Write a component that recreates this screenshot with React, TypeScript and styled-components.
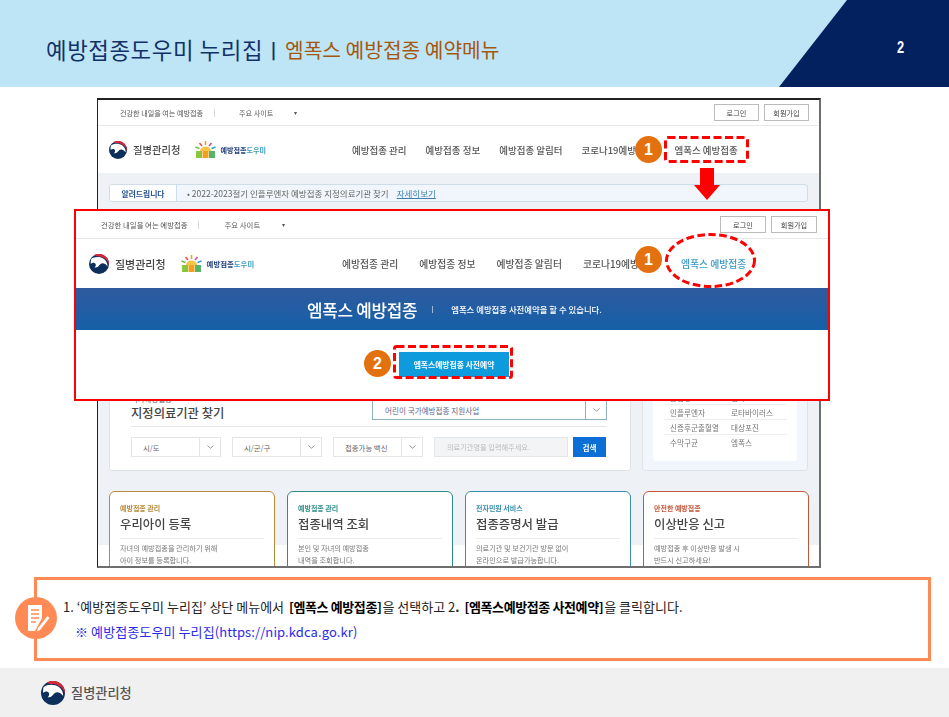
import React from 'react';
import styled, { createGlobalStyle } from 'styled-components';

const GlobalStyle = createGlobalStyle`
  html, body {
    margin: 0;
    padding: 0;
    background: #fff;
  }
  * {
    box-sizing: border-box;
  }
`;

const FONT = '"Noto Sans CJK KR", "Noto Sans", sans-serif';

const Page = styled.div`
  width: 949px;
  height: 717px;
  display: flex;
  flex-direction: column;
  overflow: hidden;
  font-family: ${FONT};
`;

const Header = styled.header`
  height: 87px;
  flex: none;
  position: relative;
  display: flex;
  align-items: center;
  padding: 11px 0 0 46px;
  background: #bee5f5;
`;

const HeaderCorner = styled.div`
  position: absolute;
  top: 0;
  right: 0;
  width: 170px;
  height: 87px;
  background: #03215f;
  clip-path: polygon(68px 0, 170px 0, 170px 87px, 0 87px);
`;

const PageNumber = styled.span`
  position: absolute;
  top: 38px;
  left: 896px;
  color: #fff;
  font-family: 'Liberation Sans', sans-serif;
  font-size: 16px;
  line-height: 20px;
  font-weight: 700;
  transform: scaleX(0.8);
`;

const Title = styled.h1`
  margin: 0;
  font-size: 22.4px;
  line-height: 28px;
  font-weight: 400;
  letter-spacing: 0.55px;
  color: #123169;
`;

const TitleBar = styled.span`
  margin: 0 9px 0 8px;
  font-size: 16px;
  font-weight: 900;
  color: #123169;
`;

const Subtitle = styled.span`
  font-size: 20.3px;
  line-height: 28px;
  color: #a5570f;
`;

const Stage = styled.main`
  position: relative;
  height: 490px;
  flex: none;
  padding: 11px 0 0 97px;
`;

const Frame = styled.div`
  width: 724px;
  height: 470px;
  border: 2px solid #6e6e6e;
  border-top-color: #222;
  border-left-color: #222;
  border-left-width: 1px;
  overflow: hidden;
  background: #fff;
`;

const Soft = styled.div`
  filter: blur(0.5px);
`;

const TopBar = styled.div<{ $big?: boolean }>`
  height: ${({ $big }) => ($big ? 28 : 26)}px;
  display: flex;
  align-items: center;
  padding: 0 ${({ $big }) => ($big ? 11 : 10)}px 0 ${({ $big }) => ($big ? 25 : 22)}px;
  border-bottom: 1px solid #e6e8ea;
  font-size: ${({ $big }) => ($big ? 7.4 : 7.1)}px;
  color: #555;
`;

const TopDivider = styled.span<{ $big?: boolean }>`
  width: 1px;
  height: 8px;
  margin: 0 ${({ $big }) => ($big ? 26 : 24)}px 0 ${({ $big }) => ($big ? 10 : 11)}px;
  background: #d8dadd;
`;

const Caret = styled.span<{ $big?: boolean }>`
  margin-left: ${({ $big }) => ($big ? 22 : 21)}px;
  font-size: 6px;
`;

const AuthGroup = styled.div`
  margin-left: auto;
  display: flex;
  gap: 5px;
`;

const AuthButton = styled.span<{ $big?: boolean }>`
  width: ${({ $big }) => ($big ? 46 : 45)}px;
  height: 17px;
  display: flex;
  align-items: center;
  justify-content: center;
  border: 1px solid #bbb;
  font-size: 7.2px;
  background: #fff;
  color: #444;
`;

const NavBar = styled.div<{ $big?: boolean }>`
  height: ${({ $big }) => ($big ? 49 : 47)}px;
  display: flex;
  align-items: center;
  padding-left: ${({ $big }) => ($big ? 13 : 11)}px;
`;

const Brand = styled.div<{ $big?: boolean }>`
  width: ${({ $big }) => ($big ? 253 : 243)}px;
  flex: none;
  display: flex;
  align-items: center;
`;

const BrandName = styled.span<{ $big?: boolean }>`
  margin: 0 15px 0 6px;
  font-size: ${({ $big }) => ($big ? 11 : 10.3)}px;
  font-weight: 500;
  color: #444;
`;

const NipName = styled.span<{ $big?: boolean }>`
  margin-left: ${({ $big }) => ($big ? 5 : 4)}px;
  font-size: ${({ $big }) => ($big ? 7.4 : 7.1)}px;
  font-weight: 700;
  color: #23407a;
  white-space: nowrap;
  b {
    color: #3c9fc4;
    font-weight: 700;
  }
`;

const NavList = styled.nav<{ $big?: boolean }>`
  display: flex;
  gap: ${({ $big }) => ($big ? 21 : 19)}px;
  white-space: nowrap;
`;

const NavItem = styled.span<{ $big?: boolean; $active?: boolean; $minWidth?: number }>`
  min-width: ${({ $minWidth }) => $minWidth ?? 0}px;
  font-size: ${({ $big }) => ($big ? 9.8 : 9.5)}px;
  font-weight: 500;
  color: ${({ $active }) => ($active ? '#3a9ac8' : '#555')};
`;

const SiteBody = styled.div`
  height: 372px;
  padding: 11px 11px 0 11px;
  background: #eef2f6;
`;

const Notice = styled.div`
  height: 18px;
  display: flex;
  align-items: center;
  border: 1px solid #cfdde8;
  border-radius: 3px;
  background: #f0f6fc;
  font-size: 8.5px;
  color: #666;
  overflow: hidden;
`;

const NoticeLabel = styled.span`
  width: 67px;
  height: 100%;
  margin-right: 10px;
  display: flex;
  align-items: center;
  justify-content: center;
  border-right: 1px solid #cfdde8;
  background: #fff;
  font-size: 7.8px;
  font-weight: 700;
  color: #25508f;
`;

const NoticeLink = styled.span`
  margin-left: 8px;
  color: #3c7fae;
  text-decoration: underline;
`;

const PanelRow = styled.div`
  height: 258px;
  margin-top: 11px;
  display: flex;
  gap: 11px;
`;

const SearchPanel = styled.section`
  width: 522px;
  flex: none;
  display: flex;
  flex-direction: column;
  justify-content: flex-end;
  padding: 0 23px 13px 21px;
  border: 1px solid #dfe3e7;
  border-radius: 3px;
  background: #fff;
`;

const SearchHead = styled.div`
  display: flex;
  justify-content: space-between;
  align-items: flex-end;
  padding-bottom: 4px;
  margin-bottom: 10px;
  border-bottom: 1px solid #e6e8ea;
`;

const Kicker = styled.div`
  font-size: 7.4px;
  line-height: 10px;
  color: #666;
`;

const SearchTitle = styled.div`
  font-size: 12.3px;
  line-height: 18px;
  font-weight: 500;
  color: #444;
`;

const ProgramSelect = styled.div`
  width: 235px;
  height: 20px;
  margin-bottom: 2px;
  display: flex;
  align-items: center;
  padding-left: 12px;
  border: 1px solid #8fb0bf;
  font-size: 7.6px;
  color: #668;
`;

const SearchRow = styled.div`
  display: flex;
  gap: 11px;
`;

const Select = styled.div`
  width: 90px;
  height: 20px;
  display: flex;
  align-items: center;
  justify-content: space-between;
  padding-left: 11px;
  border: 1px solid #e3e6e9;
  font-size: 7.4px;
  color: #666;
`;

const Chevron = styled.span<{ $tinted?: boolean }>`
  width: 21px;
  height: 100%;
  display: flex;
  align-items: center;
  justify-content: center;
  border-left: 1px solid ${({ $tinted }) => ($tinted ? '#8fb0bf' : '#e3e6e9')};
  color: #777;
  margin-left: auto;
`;

const SearchInput = styled.div`
  width: 134px;
  height: 20px;
  display: flex;
  align-items: center;
  padding-left: 12px;
  border: 1px solid #e3e6e9;
  background: #f3f4f5;
  font-size: 7.2px;
  color: #bbb;
`;

const SearchButton = styled.div`
  width: 33px;
  height: 20px;
  margin-left: -6px;
  display: flex;
  align-items: center;
  justify-content: center;
  background: #0b6fd6;
  color: #fff;
  font-size: 7.6px;
  font-weight: 700;
`;

const InfoPanel = styled.aside`
  flex: 1;
  display: flex;
  padding: 0 10px 9px 10px;
  border: 1px solid #dfe3e7;
  border-radius: 3px;
  background: #f1f6fc;
`;

const InfoInner = styled.div`
  flex: 1;
  display: flex;
  flex-direction: column;
  justify-content: flex-end;
  padding: 0 10px 12px 11px;
  border-radius: 3px;
  background: #fff;
`;

const InfoRow = styled.div`
  height: 15px;
  display: flex;
  align-items: center;
  padding-left: 6px;
  border-top: 1px solid #eceef0;
  font-size: 7.6px;
  color: #777;
`;

const InfoLabel = styled.span`
  width: 61px;
  flex: none;
`;

const CardGrid = styled.div`
  margin-top: 20px;
  display: grid;
  grid-template-columns: repeat(4, 166px);
  gap: 12px;
`;

const Card = styled.article<{ $color: string }>`
  height: 90px;
  padding: 11px 10px;
  border: 1.5px solid ${({ $color }) => $color};
  border-radius: 6px;
  background: #fff;
`;

const CardKicker = styled.div<{ $color: string }>`
  font-size: 7px;
  line-height: 10px;
  font-weight: 700;
  color: ${({ $color }) => $color};
`;

const CardTitle = styled.div`
  margin-top: 2px;
  padding-bottom: 4px;
  border-bottom: 1px solid #e8eaec;
  font-size: 12.4px;
  line-height: 19px;
  font-weight: 500;
  color: #444;
`;

const CardText = styled.p`
  margin: 3px 0 0;
  font-size: 7.2px;
  line-height: 12px;
  color: #777;
`;

const Overlay = styled.div`
  position: absolute;
  top: 122px;
  left: 74px;
  width: 756px;
  height: 192px;
  border: 2px solid #f00;
  background: #fff;
  overflow: hidden;
`;

const Banner = styled.div`
  height: 42px;
  display: flex;
  align-items: center;
  padding-left: 231px;
  background: linear-gradient(180deg, #2f5a9e, #1560a8);
  color: #fff;
`;

const BannerTitle = styled.span`
  font-size: 16.9px;
  font-weight: 500;
  letter-spacing: -0.3px;
`;

const BannerDivider = styled.span`
  width: 1px;
  height: 7px;
  margin: 0 18px 0 15px;
  background: #9db7d8;
`;

const BannerText = styled.span`
  font-size: 8.4px;
  font-weight: 500;
`;

const ReserveBand = styled.div`
  height: 68px;
  display: flex;
  align-items: center;
  justify-content: center;
  padding-left: 4px;
`;

const ReserveButton = styled.div`
  width: 110px;
  height: 25px;
  display: flex;
  align-items: center;
  justify-content: center;
  background: #0e9bdd;
  color: #fff;
  font-size: 7.8px;
  font-weight: 700;
`;

const Badge = styled.span<{ $x: number; $y: number }>`
  position: absolute;
  left: ${({ $x }) => $x}px;
  top: ${({ $y }) => $y}px;
  width: 27px;
  height: 27px;
  display: flex;
  align-items: center;
  justify-content: center;
  border-radius: 50%;
  background: #e3710f;
  color: #fff;
  font-family: 'Liberation Sans', sans-serif;
  font-size: 16px;
  font-weight: 700;
`;

const Mark = styled.svg<{ $x: number; $y: number }>`
  position: absolute;
  left: ${({ $x }) => $x}px;
  top: ${({ $y }) => $y}px;
`;

const Note = styled.section`
  position: relative;
  width: 897px;
  height: 84px;
  flex: none;
  margin-left: 34px;
  padding: 14px 0 0 26px;
  border: 3px solid #ff8a55;
  background: #fff;
  font-size: 13px;
  line-height: 25px;
  color: #222;
  white-space: nowrap;
`;

const NoteIcon = styled.div`
  position: absolute;
  left: -22px;
  top: 17px;
  width: 42px;
  height: 42px;
  display: flex;
  align-items: center;
  justify-content: center;
  border-radius: 50%;
  background: #ff8a55;
`;

const NoteStrong = styled.strong`
  margin: 0 1px 0 2px;
  font-weight: 700;
  color: #000;
  letter-spacing: -0.4px;
`;

const NoteLink = styled.div`
  padding-left: 12px;
  letter-spacing: 0.1px;
  color: #2a2ae8;
`;

const Footer = styled.footer`
  height: 49px;
  flex: none;
  margin-top: 7px;
  display: flex;
  align-items: center;
  gap: 6px;
  padding-left: 41px;
  background: #f0f0f0;
`;

const FooterName = styled.span`
  font-size: 13.2px;
  font-weight: 500;
  color: #555;
`;

const KdcaLogo: React.FC<{ size: number }> = ({ size }) => (
  <svg width={size} height={size} viewBox="0 0 40 40" style={{ flex: 'none' }}>
    <circle cx="20" cy="20" r="20" fill="#0c2f5c" />
    <path d="M9 3.2 A20 20 0 0 1 40 21 C37 12 30 6 20 5 C16 4.6 12 4 9 3.2Z" fill="#d4283a" />
    <path d="M4.5 10 C10 5.5 22 4.5 30 10 C35 14 37 19 37 25 C33 19 27 17 23 20 C19 24 17 28 11 27 C14 25 15 20 11 18 C8 17 6 18 3.5 20 C3.5 16 3.5 13 4.5 10Z" fill="#fff" />
  </svg>
);

const NipLogo: React.FC = () => (
  <svg width="21" height="17" viewBox="0 0 21 17" style={{ flex: 'none' }}>
    <path d="M10.5 0v4" stroke="#f2a01e" strokeWidth="1.6" />
    <path d="M4.5 2l2.5 3" stroke="#e5554b" strokeWidth="1.6" />
    <path d="M16.5 2l-2.5 3" stroke="#d24e9a" strokeWidth="1.6" />
    <path d="M0.5 6l4 1.5" stroke="#7dbb42" strokeWidth="1.6" />
    <path d="M20.5 6l-4 1.5" stroke="#2f9ed8" strokeWidth="1.6" />
    <path d="M5 10a5.5 4.5 0 0 1 11 0z" fill="#f6c445" />
    <rect x="1" y="10" width="6" height="7" fill="#8cc63f" />
    <rect x="7.5" y="10" width="6" height="7" fill="#f2a01e" />
    <rect x="14" y="10" width="6" height="7" fill="#58b368" />
  </svg>
);

const ChevronMark: React.FC = () => (
  <svg width="7" height="4" viewBox="0 0 7 4">
    <path d="M0.5 0.5L3.5 3.2L6.5 0.5" fill="none" stroke="#777" strokeWidth="0.8" />
  </svg>
);

const SiteHeader: React.FC<{ big?: boolean }> = ({ big }) => (
  <>
    <TopBar $big={big}>
      <span>건강한 내일을 여는 예방접종</span>
      <TopDivider $big={big} />
      <span>주요 사이트</span>
      <Caret $big={big}>▾</Caret>
      <AuthGroup>
        <AuthButton $big={big}>로그인</AuthButton>
        <AuthButton $big={big}>회원가입</AuthButton>
      </AuthGroup>
    </TopBar>
    <NavBar $big={big}>
      <Brand $big={big}>
        <KdcaLogo size={big ? 20 : 18} />
        <BrandName $big={big}>질병관리청</BrandName>
        <NipLogo />
        <NipName $big={big}>
          예방접종<b>도우미</b>
        </NipName>
      </Brand>
      <NavList $big={big}>
        <NavItem $big={big}>예방접종 관리</NavItem>
        <NavItem $big={big}>예방접종 정보</NavItem>
        <NavItem $big={big}>예방접종 알림터</NavItem>
        <NavItem $big={big} $minWidth={big ? 77 : 74}>
          코로나19예방
        </NavItem>
        <NavItem $big={big} $active={big}>
          엠폭스 예방접종
        </NavItem>
      </NavList>
    </NavBar>
  </>
);

const selects = ['시/도', '시/군/구', '접종가능 백신'];

const infoRows = [
  ['감염병', '엠폭스'],
  ['인플루엔자', '로타바이러스'],
  ['신증후군출혈열', '대상포진'],
  ['수막구균', '엠폭스'],
];

const cards = [
  { color: '#b8893a', kicker: '예방접종 관리', title: '우리아이 등록', lines: ['자녀의 예방접종을 관리하기 위해', '아이 정보를 등록합니다.'] },
  { color: '#2e8b8b', kicker: '예방접종 관리', title: '접종내역 조회', lines: ['본인 및 자녀의 예방접종', '내역을 조회합니다.'] },
  { color: '#3a8dae', kicker: '전자민원 서비스', title: '접종증명서 발급', lines: ['의료기관 및 보건기관 방문 없이', '온라인으로 발급가능합니다.'] },
  { color: '#c2573a', kicker: '안전한 예방접종', title: '이상반응 신고', lines: ['예방접종 후 이상반응 발생 시', '반드시 신고하세요!'] },
];

const App: React.FC = () => (
  <Page>
    <GlobalStyle />
    <Header>
      <Title>예방접종도우미 누리집</Title>
      <TitleBar>|</TitleBar>
      <Subtitle>엠폭스 예방접종 예약메뉴</Subtitle>
      <HeaderCorner />
      <PageNumber>2</PageNumber>
    </Header>

    <Stage>
      <Frame>
        <Soft>
          <SiteHeader />
          <SiteBody>
            <Notice>
              <NoticeLabel>알려드립니다</NoticeLabel>
              <span>• 2022-2023절기 인플루엔자 예방접종 지정의료기관 찾기</span>
              <NoticeLink>자세히보기</NoticeLink>
            </Notice>
            <PanelRow>
              <SearchPanel>
                <SearchHead>
                  <div>
                    <Kicker>국가예방접종</Kicker>
                    <SearchTitle>지정의료기관 찾기</SearchTitle>
                  </div>
                  <ProgramSelect>
                    어린이 국가예방접종 지원사업
                    <Chevron $tinted>
                      <ChevronMark />
                    </Chevron>
                  </ProgramSelect>
                </SearchHead>
                <SearchRow>
                  {selects.map((label) => (
                    <Select key={label}>
                      {label}
                      <Chevron>
                        <ChevronMark />
                      </Chevron>
                    </Select>
                  ))}
                  <SearchInput>의료기관명을 입력해주세요.</SearchInput>
                  <SearchButton>검색</SearchButton>
                </SearchRow>
              </SearchPanel>
              <InfoPanel>
                <InfoInner>
                  {infoRows.map(([label, value]) => (
                    <InfoRow key={label}>
                      <InfoLabel>{label}</InfoLabel>
                      {value}
                    </InfoRow>
                  ))}
                </InfoInner>
              </InfoPanel>
            </PanelRow>
            <CardGrid>
              {cards.map((card) => (
                <Card key={card.title} $color={card.color}>
                  <CardKicker $color={card.color}>{card.kicker}</CardKicker>
                  <CardTitle>{card.title}</CardTitle>
                  <CardText>
                    {card.lines[0]}
                    <br />
                    {card.lines[1]}
                  </CardText>
                </Card>
              ))}
            </CardGrid>
          </SiteBody>
        </Soft>
      </Frame>

      <Badge $x={635} $y={49}>1</Badge>
      <Mark $x={664} $y={49} width="85" height="27" viewBox="0 0 85 27">
        <rect x="1.5" y="1.5" width="82" height="24" rx="2" fill="none" stroke="#f00" strokeWidth="3" strokeDasharray="8 3.5" />
      </Mark>
      <Mark $x={694} $y={81} width="26" height="32" viewBox="0 0 26 32">
        <path d="M6 0H20V17H26L13 32L0 17H6Z" fill="#f00" />
      </Mark>

      <Overlay>
        <Soft>
          <SiteHeader big />
          <Banner>
            <BannerTitle>엠폭스 예방접종</BannerTitle>
            <BannerDivider />
            <BannerText>엠폭스 예방접종 사전예약을 할 수 있습니다.</BannerText>
          </Banner>
          <ReserveBand>
            <ReserveButton>엠폭스예방접종 사전예약</ReserveButton>
          </ReserveBand>
        </Soft>
      </Overlay>

      <Badge $x={635} $y={159}>1</Badge>
      <Mark $x={665} $y={146} width="91" height="55" viewBox="0 0 91 55">
        <ellipse cx="45.5" cy="27.5" rx="44" ry="26" fill="none" stroke="#f00" strokeWidth="3" strokeDasharray="7.5 3.5" />
      </Mark>
      <Badge $x={364} $y={263}>2</Badge>
      <Mark $x={393} $y={258} width="120" height="34" viewBox="0 0 120 34">
        <rect x="1.5" y="1.5" width="117" height="31" rx="2" fill="none" stroke="#f00" strokeWidth="3" strokeDasharray="8 3.5" />
      </Mark>
    </Stage>

    <Note>
      <NoteIcon>
        <svg width="28" height="30" viewBox="0 0 28 30">
          <path d="M6 2H20V15L13 28H6Z" fill="#fff" />
          <path d="M9 7H17M9 11H17M9 15H17M9 19H14" stroke="#ff8a55" strokeWidth="1.6" />
          <path d="M16 25L25.5 13L27.5 15L18 27L15 28.5Z" fill="#fff" />
        </svg>
      </NoteIcon>
      <div>
        1. ‘예방접종도우미 누리집’ 상단 메뉴에서 <NoteStrong>[엠폭스 예방접종]</NoteStrong>을 선택하고 2
        <b>.</b> <NoteStrong>[엠폭스예방접종 사전예약]</NoteStrong>을 클릭합니다.
      </div>
      <NoteLink>※ 예방접종도우미 누리집(https://nip.kdca.go.kr)</NoteLink>
    </Note>

    <Footer>
      <KdcaLogo size={24} />
      <FooterName>질병관리청</FooterName>
    </Footer>
  </Page>
);

export default App;
